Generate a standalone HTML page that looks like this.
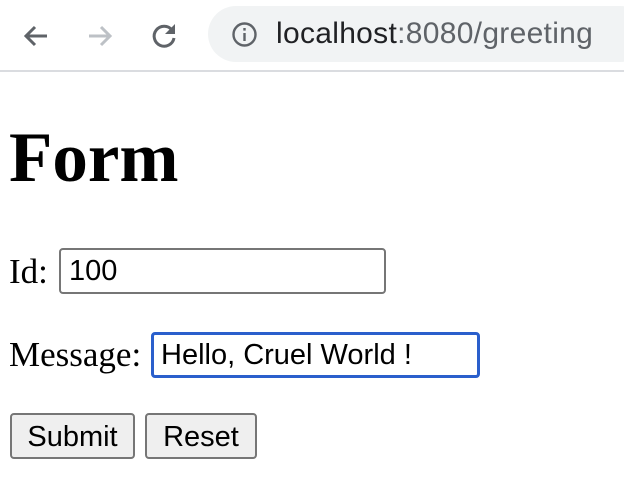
<!DOCTYPE html>
<html><head><meta charset="utf-8"><style>
*{margin:0;padding:0;box-sizing:border-box}
body{width:624px;height:486px;background:#fff;position:relative;overflow:hidden;font-family:"Liberation Serif",serif}
.a{position:absolute}
.omni{left:208px;top:6px;width:440px;height:56px;border-radius:28px;background:#f1f3f4}
.url{left:276px;top:15px;font:30px "Liberation Sans",sans-serif;color:#202124;line-height:38px;letter-spacing:0.3px}
.url span{color:#5f6368}
.sep{left:0;top:70px;width:624px;height:2px;background:#dadce0}
h1{position:absolute;left:9px;top:118px;font-size:71px;font-weight:bold;line-height:80px}
.lbl{font-size:35px;line-height:40px}
.inp{border:2px solid #767676;border-radius:4px;background:#fff;font:29px "Liberation Sans",sans-serif;padding-left:8px;line-height:42px}
.btn{border:2px solid #767676;border-radius:4px;background:#efefef;font:29px "Liberation Sans",sans-serif;text-align:center;line-height:44px}
</style></head><body>
<svg class="a" style="left:20px;top:20px" width="32" height="32" viewBox="0 0 32 32"><path d="M27 16H6M15 7l-9 9 9 9" stroke="#5f6368" stroke-width="3" fill="none"/></svg>
<svg class="a" style="left:84px;top:20px" width="32" height="32" viewBox="0 0 32 32"><path d="M5 16h21M17 7l9 9-9 9" stroke="#bdc1c6" stroke-width="3" fill="none"/></svg>
<svg class="a" style="left:148px;top:19px" width="32" height="32" viewBox="0 0 32 32"><path d="M24 11A10 10 0 1 0 26 19" stroke="#5f6368" stroke-width="3" fill="none"/><path d="M27 5v10H17z" fill="#5f6368"/></svg>
<div class="a omni"></div>
<svg class="a" style="left:231px;top:21px" width="27" height="27" viewBox="0 0 27 27"><circle cx="13.5" cy="13.5" r="11" stroke="#5f6368" stroke-width="2.4" fill="none"/><rect x="12.3" y="12" width="2.4" height="8" fill="#5f6368"/><rect x="12.3" y="7" width="2.4" height="2.6" fill="#5f6368"/></svg>
<div class="a url">localhost<span>:8080/greeting</span></div>
<div class="a sep"></div>
<h1>Form</h1>
<div class="a lbl" style="left:9px;top:252px">Id:</div>
<div class="a inp" style="left:59px;top:248px;width:327px;height:46px">100</div>
<div class="a lbl" style="left:9px;top:335px">Message:</div>
<div class="a inp" style="left:151px;top:332px;width:329px;height:46px;border:3px solid #2a5fcc;padding-left:7px;line-height:40px">Hello, Cruel World !</div>
<div class="a btn" style="left:10px;top:413px;width:125px;height:46px">Submit</div>
<div class="a btn" style="left:145px;top:413px;width:112px;height:46px">Reset</div>
</body></html>
